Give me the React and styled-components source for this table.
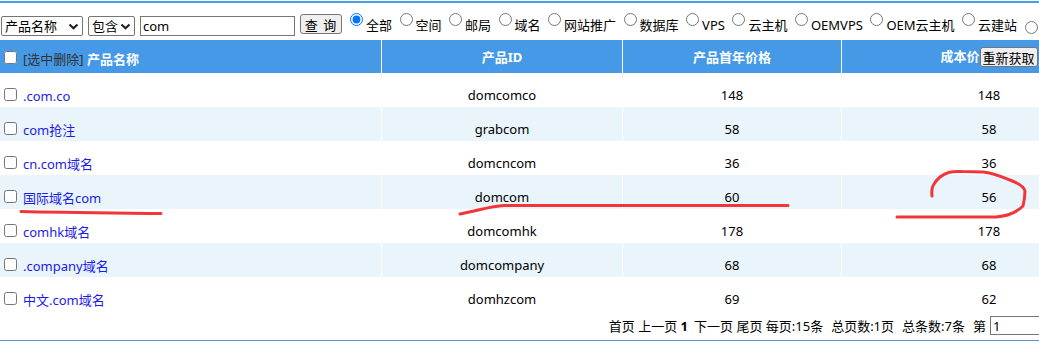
import styled, { createGlobalStyle } from "styled-components";

const GlobalStyle = createGlobalStyle`
html, body {
  margin: 0;
  padding: 0;
  background: #fff;
  overflow: hidden;
}
body {
  font-family: "Noto Sans", "Noto Sans CJK SC", sans-serif;
  font-size: 13px;
  color: #000;
}
`;

const Page = styled.div`position: relative;
width: 1136px;
border-top: 2px solid #4a9de8;
margin-top: 1px;
`;
const Toolbar = styled.div`display: flex;
flex-direction: row;
align-items: flex-end;
white-space: nowrap;
height: 33px;
padding: 0 0 4px 1px;
`;
const SelectBox = styled.div`position: relative;
display: inline-block;
margin-right: 5px;
`;
const Select = styled.select`appearance: none;
display: block;
height: 20px;
width: ${(p) => p.$w}px;
font-family: "Noto Sans", "Noto Sans CJK SC", sans-serif;
font-size: 13px;
line-height: 18px;
border: 1px solid #767676;
border-radius: 2px;
background: #fff;
color: #000;
padding: 0 0 0 3px;
`;
const Chevron = styled.svg`position: absolute;
right: 4px;
top: 7px;
pointer-events: none;
`;
const SearchInput = styled.input`width: 149px;
height: 16px;
border: 1px solid #767676;
font-family: "Noto Sans", "Noto Sans CJK SC", sans-serif;
font-size: 13px;
padding: 1px 2px;
margin: 0 5px 0 0;
`;
const QueryButton = styled.button`width: 42px;
height: 20px;
margin-bottom: 2px;
padding: 0;
border: 1px solid #767676;
border-radius: 3px;
background: #efefef;
font-family: "Noto Sans", "Noto Sans CJK SC", sans-serif;
font-size: 13px;
color: #000;
letter-spacing: 1px;
`;
const RadioGroup = styled.div`display: flex;
flex-direction: row;
align-items: flex-end;
margin-left: 8px;
margin-bottom: 2px;
`;
const RadioLabel = styled.label`display: inline-flex;
align-items: flex-start;
margin-right: 7.5px;
`;
const Radio = styled.input`width: 13px;
height: 13px;
margin: 0 3px 0 0;
`;
const RadioText = styled.span`padding-top: 3px;
line-height: 18px;
`;
const Table = styled.table`width: 1136px;
border-collapse: separate;
border-spacing: 0;
table-layout: fixed;
`;
const HeadCell = styled.th`background: #4599e6;
color: #fff;
font-weight: bold;
font-size: 13px;
height: 33px;
box-sizing: border-box;
padding: ${(p) => (p.$first ? "2px 0 0 0" : "0")};
text-align: ${(p) => (p.$first ? "left" : "center")};
border-left: ${(p) => (p.$first ? "none" : "1px solid #fff")};
vertical-align: middle;
white-space: nowrap;
`;
const DeleteLabel = styled.span`color: #333;
font-weight: normal;
`;
const Check = styled.input`width: 13px;
height: 13px;
margin: 3px 6px 3px 4px;
`;
const RefreshButton = styled.button`height: 20px;
padding: 0 2px;
border: 1px solid #767676;
border-radius: 3px;
background: #efefef;
font-family: "Noto Sans", "Noto Sans CJK SC", sans-serif;
font-size: 13px;
color: #000;
vertical-align: middle;
`;
const Row = styled.tr`background: ${(p) => (p.$alt ? "#e9f4fb" : "#fff")};
`;
const Cell = styled.td`height: 34px;
padding: 9px 0 0 0;
box-sizing: border-box;
text-align: ${(p) => (p.$first ? "left" : "center")};
border-left: ${(p) => (p.$first ? "none" : "1px solid #fff")};
vertical-align: middle;
line-height: 18px;
white-space: nowrap;
`;
const NameLink = styled.a`color: #1c1ce6;
text-decoration: none;
`;
const PagerCell = styled.td`height: 30px;
box-sizing: border-box;
text-align: right;
padding: 0 92px 0 0;
border-bottom: 1px solid #5b93d0;
white-space: nowrap;
`;
const PagerItem = styled.span`margin-left: ${(p) => p.$gap || 4}px;
`;
const PageInput = styled.input`width: 48px;
height: 15px;
border: 1px solid #767676;
font-size: 13px;
padding: 1px 2px;
margin-left: 4px;
font-family: "Noto Sans", sans-serif;
`;
const Marks = styled.svg`position: absolute;
left: 0;
top: -3px;
pointer-events: none;
`;

const types = ["全部", "空间", "邮局", "域名", "网站推广", "数据库", "VPS", "云主机", "OEMVPS", "OEM云主机", "云建站", ""];

const rows = [
  { name: ".com.co", id: "domcomco", price: 148, cost: 148 },
  { name: "com抢注", id: "grabcom", price: 58, cost: 58 },
  { name: "cn.com域名", id: "domcncom", price: 36, cost: 36 },
  { name: "国际域名com", id: "domcom", price: 60, cost: 56 },
  { name: "comhk域名", id: "domcomhk", price: 178, cost: 178 },
  { name: ".company域名", id: "domcompany", price: 68, cost: 68 },
  { name: "中文.com域名", id: "domhzcom", price: 69, cost: 62 },
];

const Dropdown = ({ w, label }) => (
  <SelectBox>
    <Select $w={w} defaultValue={label}>
      <option value={label}>{label}</option>
    </Select>
    <Chevron width="11" height="7" viewBox="0 0 11 7">
      <polyline points="1.5,1.5 5.5,5.2 9.5,1.5" fill="none" stroke="#222" strokeWidth="2.2" />
    </Chevron>
  </SelectBox>
);

const App = () => {
  return (
    <>
      <GlobalStyle />
      <Page>
        <Toolbar>
          <Dropdown w={82} label="产品名称" />
          <Dropdown w={47} label="包含" />
          <SearchInput defaultValue="com" />
          <QueryButton>查 询</QueryButton>
          <RadioGroup>
            {types.map((t, i) => (
              <RadioLabel key={i}>
                <Radio type="radio" name="ptype" defaultChecked={i === 0} />
                <RadioText>{t}</RadioText>
              </RadioLabel>
            ))}
          </RadioGroup>
        </Toolbar>
        <Table>
          <colgroup>
            <col style={{ width: 381 }} />
            <col style={{ width: 241 }} />
            <col style={{ width: 219 }} />
            <col style={{ width: 295 }} />
          </colgroup>
          <thead>
            <tr>
              <HeadCell $first>
                <Check type="checkbox" />
                <DeleteLabel>[选中删除]</DeleteLabel> 产品名称
              </HeadCell>
              <HeadCell>产品ID</HeadCell>
              <HeadCell>产品首年价格</HeadCell>
              <HeadCell>
                成本价<RefreshButton>重新获取</RefreshButton>
              </HeadCell>
            </tr>
          </thead>
          <tbody>
            {rows.map((r, i) => (
              <Row key={r.id} $alt={i % 2 === 1}>
                <Cell $first>
                  <Check type="checkbox" />
                  <NameLink href="#">{r.name}</NameLink>
                </Cell>
                <Cell>{r.id}</Cell>
                <Cell>{r.price}</Cell>
                <Cell>{r.cost}</Cell>
              </Row>
            ))}
            <tr>
              <PagerCell colSpan={4}>
                首页 上一页 <b>1</b>
                <PagerItem $gap={6}>下一页 尾页 每页:15条</PagerItem>
                <PagerItem $gap={8}>总页数:1页</PagerItem>
                <PagerItem $gap={8}>总条数:7条</PagerItem>
                <PagerItem $gap={8}>第</PagerItem>
                <PageInput defaultValue="1" />
              </PagerCell>
            </tr>
          </tbody>
        </Table>
        <Marks width="1136" height="360" viewBox="0 0 1136 360">
          <g fill="none" stroke="#f2353b" strokeWidth="3" strokeLinecap="round" strokeLinejoin="round">
            <path d="M21 211.5 C60 212.5 120 213 161 213.5" />
            <path d="M460 214 C480 210 492 206 504 205.5 L788 205.5" />
            <path d="M932 196 C931 188 933 183 940 177 C946 172 952 171 962 171.5 L983 172 C993 173 1000 176 1010 180 C1018 183 1024 186 1025 191 C1025 197 1024 202 1023 206 C1018 211 1008 216 996 217 L897 217" />
          </g>
        </Marks>
      </Page>
    </>
  );
};

export default App;
